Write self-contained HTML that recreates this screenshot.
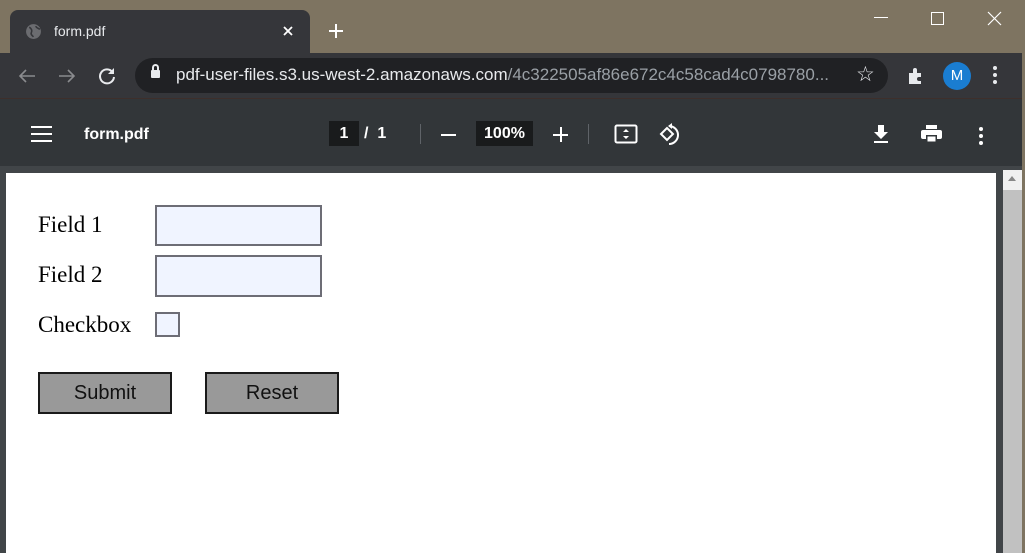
<!DOCTYPE html>
<html><head><style>
*{margin:0;padding:0;box-sizing:border-box}
body{width:1025px;height:553px;overflow:hidden;background:#525659;font-family:"Liberation Sans",sans-serif;position:relative}
.a{position:absolute}
.lbl{font-family:'Liberation Serif',serif;font-size:23px;color:#000}
</style></head><body>
<div class="a" style="left:0;top:0;width:1025px;height:53px;background:#7e7461"></div>
<div class="a" style="left:10px;top:10px;width:300px;height:45px;background:#35363a;border-radius:8px 8px 0 0"></div>
<svg class="a" style="left:25px;top:23px" width="17" height="17" viewBox="0 0 16 16"><circle cx="8" cy="8" r="7" fill="#6b6c70"/><path d="M4 4c2 1 3 3 2 5s1 3 2 4M10 3c1 2 3 2 4 3" stroke="#35363a" stroke-width="1.5" fill="none"/></svg>
<div class="a" style="left:54px;top:23px;color:#e8eaed;font-size:14px">form.pdf</div>
<svg class="a" style="left:283px;top:26px" width="10" height="10" viewBox="0 0 10 10"><path d="M1 1l8 8M9 1l-8 8" stroke="#fff" stroke-width="1.8"/></svg>
<svg class="a" style="left:329px;top:24px" width="14" height="14" viewBox="0 0 14 14"><path d="M7 0v14M0 7h14" stroke="#fff" stroke-width="2"/></svg>
<div class="a" style="left:874px;top:17px;width:14px;height:1px;background:#fff"></div>
<div class="a" style="left:931px;top:12px;width:13px;height:13px;border:1px solid #fff"></div>
<svg class="a" style="left:987px;top:11px" width="15" height="15" viewBox="0 0 15 15"><path d="M1 1l13 13M14 1L1 14" stroke="#fff" stroke-width="1.2"/></svg>
<div class="a" style="left:0;top:53px;width:1025px;height:46px;background:#35363a;border-bottom:1px solid #3e2f2b"></div>
<svg class="a" style="left:18px;top:68px" width="18" height="16" viewBox="0 0 18 16"><path d="M17 8H2M8 2L2 8l6 6" stroke="#8a8b8e" stroke-width="1.6" fill="none"/></svg>
<svg class="a" style="left:58px;top:68px" width="18" height="16" viewBox="0 0 18 16"><path d="M1 8h15M10 2l6 6-6 6" stroke="#8a8b8e" stroke-width="1.6" fill="none"/></svg>
<svg class="a" style="left:97px;top:66px" width="20" height="20" viewBox="0 0 20 20"><path d="M15.5 6A7 7 0 1 0 17 11" stroke="#e8eaed" stroke-width="2" fill="none"/><path d="M17 2v6h-6z" fill="#e8eaed"/></svg>
<div class="a" style="left:135px;top:58px;width:753px;height:35px;background:#202124;border-radius:18px"></div>
<div class="a" style="left:151px;top:70px;width:9px;height:8px;background:#e8eaed;border-radius:1px"></div>
<div class="a" style="left:152px;top:64px;width:7px;height:9px;border:2px solid #e8eaed;border-radius:4px 4px 0 0"></div>
<div class="a" style="left:176px;top:65px;font-size:17px;color:#e8eaed;white-space:nowrap">pdf-user-files.s3.us-west-2.amazonaws.com<span style="color:#9aa0a6">/4c322505af86e672c4c58cad4c0798780...</span></div>
<div class="a" style="left:856px;top:62px;color:#e8eaed;font-size:21px">☆</div>
<svg class="a" style="left:906px;top:66px" width="20" height="20" viewBox="0 0 20 20"><path d="M3 7h4V4a2 2 0 0 1 4 0v3h4v4h-2a2 2 0 0 0 0 4h2v3H3z" fill="#e8eaed"/></svg>
<div class="a" style="left:943px;top:62px;width:28px;height:28px;border-radius:50%;background:#1a7dd1;color:#fff;font-size:15px;text-align:center;line-height:28px">M</div>
<div class="a" style="left:993px;top:66px;width:4px;height:4px;background:#e8eaed;border-radius:50%;box-shadow:0 7px 0 #e8eaed,0 14px 0 #e8eaed"></div>
<div class="a" style="left:0;top:99px;width:1025px;height:67px;background:#323639"></div>
<div class="a" style="left:31px;top:126px;width:21px;height:2px;background:#fff;box-shadow:0 7px 0 #fff,0 14px 0 #fff"></div>
<div class="a" style="left:84px;top:126px;color:#fff;font-size:16px;font-weight:bold">form.pdf</div>
<div class="a" style="left:329px;top:121px;width:30px;height:25px;background:#191b1c;color:#fff;font-size:16px;font-weight:bold;text-align:center;line-height:25px">1</div>
<div class="a" style="left:364px;top:125px;color:#fff;font-size:16px;font-weight:bold">/&nbsp;&nbsp;1</div>
<div class="a" style="left:420px;top:124px;width:1px;height:20px;background:#5f6368"></div>
<div class="a" style="left:441px;top:134px;width:15px;height:2px;background:#fff"></div>
<div class="a" style="left:476px;top:121px;width:57px;height:25px;background:#191b1c;color:#fff;font-size:16px;font-weight:bold;text-align:center;line-height:25px">100%</div>
<div class="a" style="left:553px;top:134px;width:15px;height:2px;background:#fff"></div>
<div class="a" style="left:560px;top:127px;width:2px;height:15px;background:#fff"></div>
<div class="a" style="left:588px;top:124px;width:1px;height:20px;background:#5f6368"></div>
<svg class="a" style="left:614px;top:123px" width="24" height="22" viewBox="0 0 24 22"><rect x="1.5" y="2.5" width="21" height="17" rx="1.5" fill="none" stroke="#fff" stroke-width="2"/><path d="M12 6l-3 3h6zM12 16l-3-3h6z" fill="#fff"/></svg>
<svg class="a" style="left:659px;top:122px" width="25" height="25" viewBox="0 0 25 25"><path d="M2 12l6-6 6 6-6 6z" fill="none" stroke="#fff" stroke-width="2"/><path d="M10 4a9 9 0 1 1 0 18" fill="none" stroke="#fff" stroke-width="2"/><path d="M13 1l-4 3 4 3z" fill="#fff"/></svg>
<svg class="a" style="left:872px;top:124px" width="18" height="20" viewBox="0 0 18 20"><path d="M6 1h6v7h4l-7 7-7-7h4z" fill="#fff"/><rect x="2" y="17" width="14" height="2" fill="#fff"/></svg>
<svg class="a" style="left:920px;top:124px" width="23" height="20" viewBox="0 0 23 20"><rect x="6" y="1" width="11" height="4" fill="#fff"/><rect x="1" y="6" width="21" height="9" rx="2" fill="#fff"/><rect x="6" y="11" width="11" height="8" fill="#323639"/><rect x="7.5" y="12.5" width="8" height="5" fill="#fff"/></svg>
<div class="a" style="left:979px;top:127px;width:4px;height:4px;background:#fff;border-radius:50%;box-shadow:0 7px 0 #fff,0 14px 0 #fff"></div>
<div class="a" style="left:0;top:166px;width:1025px;height:387px;background:#414548"></div>
<div class="a" style="left:6px;top:173px;width:990px;height:380px;background:#fff"></div>
<div class="a" style="left:1003px;top:170px;width:19px;height:383px;background:#c1c1c1"></div>
<div class="a" style="left:1003px;top:170px;width:19px;height:20px;background:#f0f0f0"></div>
<div class="a" style="left:1008px;top:176px;width:0;height:0;border-left:4px solid transparent;border-right:4px solid transparent;border-bottom:5px solid #888"></div>
<div class="a" style="left:1022px;top:0;width:3px;height:553px;background:#7e7461"></div>
<div class="a lbl" style="left:38px;top:212px">Field 1</div>
<div class="a lbl" style="left:38px;top:262px">Field 2</div>
<div class="a lbl" style="left:38px;top:312px">Checkbox</div>
<div class="a" style="left:155px;top:205px;width:167px;height:41px;background:#f0f4ff;border:2px solid #6d6d76"></div>
<div class="a" style="left:155px;top:255px;width:167px;height:42px;background:#f0f4ff;border:2px solid #6d6d76"></div>
<div class="a" style="left:155px;top:312px;width:25px;height:25px;background:#f0f4ff;border:2px solid #6d6d76"></div>
<div class="a" style="left:38px;top:372px;width:134px;height:42px;background:#999;border:2px solid #1a1a1a;font-size:20px;text-align:center;line-height:39px;color:#111">Submit</div>
<div class="a" style="left:205px;top:372px;width:134px;height:42px;background:#999;border:2px solid #1a1a1a;font-size:20px;text-align:center;line-height:39px;color:#111">Reset</div>
</body></html>
